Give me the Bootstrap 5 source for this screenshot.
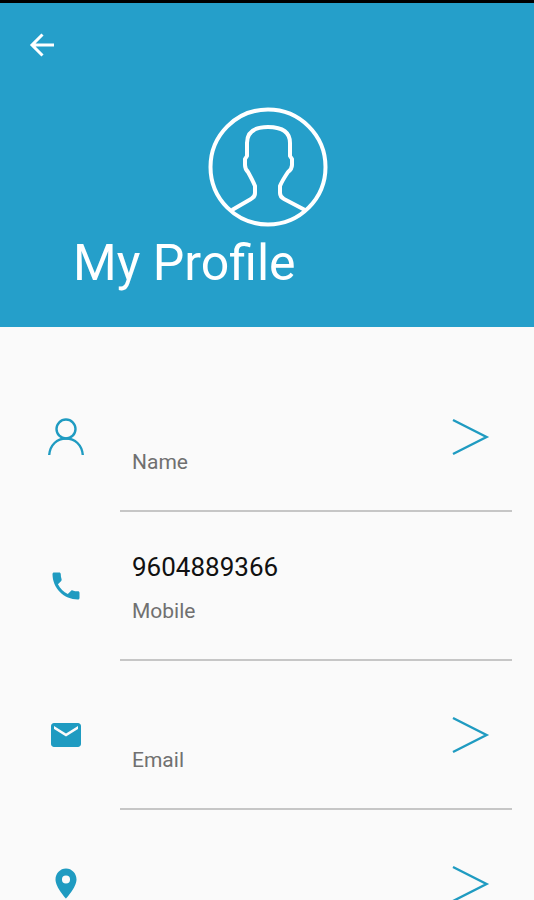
<!DOCTYPE html>
<html lang="en">
<head>
<meta charset="utf-8">
<meta name="viewport" content="width=device-width, initial-scale=1">
<title>My Profile</title>
<link rel="stylesheet" href="https://cdn.jsdelivr.net/npm/bootstrap@5.3.0/dist/css/bootstrap.min.css">
<style>
  :root { --brand: #259fca; --accent: #1f9bc1; }
  body { font-family: Roboto, "Liberation Sans", sans-serif; background: #fafafa; }
  svg { overflow: visible; }
  .status-strip { height: 3px; background: #000; }
  .profile-header { background: var(--brand); padding: 24px 24px 34px; }
  .back-btn { width: 36px; height: 36px; }
  .avatar { width: 120px; height: 120px; margin-top: 44px; }
  .profile-title { font-size: 50px; line-height: 60px; font-weight: 400; padding: 6px 0 0 49px; margin: 0; }
  .profile-list { padding: 36px 22px 0 0; }
  .profile-row { min-height: 149px; }
  .row-icon { width: 120px; padding: 0 0 2px 48px; color: var(--accent); }
  .row-body { border-bottom: 2px solid #c6c6c6; padding: 39px 24px 0 12px; }
  .row-value { font-size: 26px; line-height: 32px; min-height: 32px; color: #111; }
  .row-label { font-size: 21px; line-height: 28px; margin-top: 14px; color: #707070; }
  .edit-btn { width: 36px; height: 36px; margin-top: 17px; color: var(--accent); }
</style>
<script src="https://cdn.jsdelivr.net/npm/bootstrap@5.3.0/dist/js/bootstrap.bundle.min.js"></script>
</head>
<body class="vh-100 overflow-hidden">
<div class="status-strip"></div>
<header class="profile-header text-white d-flex flex-column">
  <button type="button" class="btn back-btn p-0 border-0 text-white d-flex align-items-center justify-content-center" aria-label="Back">
    <svg width="36" height="36" viewBox="0 0 36 36" fill="none" stroke="currentColor" stroke-width="3"><path d="M30 18H8M18.500 7.500L8 18l10.500 10.500"/></svg>
  </button>
  <svg class="avatar align-self-center" viewBox="0 0 120 120" fill="none" stroke="#fff" stroke-width="4" stroke-linejoin="round" aria-hidden="true">
    <circle cx="61" cy="60" r="57.500"/>
    <path d="M25 103L44 92Q48 90 48 86V79Q46 74 41 65Q38 62 38 58V52L40 49V36C40 25 47 20 61 20S83 25 83 36V49L85 52V58Q85 62 81 65Q75 74 73 79V86Q73 90 77 92L98 103"/>
  </svg>
  <h1 class="profile-title">My Profile</h1>
</header>
<main>
  <ul class="profile-list list-unstyled mb-0">
    <li class="profile-row d-flex">
      <div class="row-icon d-flex align-items-center flex-shrink-0">
        <svg width="36" height="36" viewBox="0 0 36 36" fill="none" stroke="currentColor" stroke-width="2.400" aria-hidden="true"><circle cx="18" cy="10" r="9.500"/><path d="M1.200 36C2 26 9 19.500 18 19.500S34 26 34.800 36"/></svg>
      </div>
      <div class="row-body d-flex flex-grow-1 justify-content-between">
        <div><div class="row-value"></div><div class="row-label">Name</div></div>
        <button type="button" class="btn edit-btn p-0 border-0 d-flex" aria-label="Edit name"><svg width="36" height="36" viewBox="0 0 36 36" fill="none" stroke="currentColor" stroke-width="2.400"><path d="M1 1L34.500 18L1 35"/></svg></button>
      </div>
    </li>
    <li class="profile-row d-flex">
      <div class="row-icon d-flex align-items-center flex-shrink-0">
        <svg width="36" height="36" viewBox="0 0 24 24" fill="currentColor" aria-hidden="true"><path d="M6.620 10.790c1.440 2.830 3.760 5.140 6.590 6.590l2.200-2.200c.27-.27.67-.36 1.020-.24 1.120.37 2.330.57 3.570.57.55 0 1 .45 1 1V20c0 .55-.45 1-1 1-9.390 0-17-7.610-17-17 0-.55.45-1 1-1h3.500c.55 0 1 .45 1 1 0 1.250.2 2.450.57 3.570.11.35.03.74-.25 1.020l-2.200 2.200z"/></svg>
      </div>
      <div class="row-body d-flex flex-grow-1 justify-content-between">
        <div><div class="row-value">9604889366</div><div class="row-label">Mobile</div></div>
      </div>
    </li>
    <li class="profile-row d-flex">
      <div class="row-icon d-flex align-items-center flex-shrink-0">
        <svg width="36" height="36" viewBox="0 0 24 24" fill="currentColor" aria-hidden="true"><path d="M20 4H4c-1.100 0-1.990.9-1.990 2L2 18c0 1.100.9 2 2 2h16c1.100 0 2-.9 2-2V6c0-1.100-.9-2-2-2zm0 4l-8 5-8-5V6l8 5 8-5v2z"/></svg>
      </div>
      <div class="row-body d-flex flex-grow-1 justify-content-between">
        <div><div class="row-value"></div><div class="row-label">Email</div></div>
        <button type="button" class="btn edit-btn p-0 border-0 d-flex" aria-label="Edit email"><svg width="36" height="36" viewBox="0 0 36 36" fill="none" stroke="currentColor" stroke-width="2.400"><path d="M1 1L34.500 18L1 35"/></svg></button>
      </div>
    </li>
    <li class="profile-row d-flex">
      <div class="row-icon d-flex align-items-center flex-shrink-0">
        <svg width="36" height="36" viewBox="0 0 24 24" fill="currentColor" aria-hidden="true"><path d="M12 1.700C8.130 1.700 5 5 5 9c0 5.250 7 12.700 7 12.700s7-7.450 7-12.700c0-4-3.130-7.300-7-7.300zm0 10a2.700 2.700 0 1 1 0-5.400 2.700 2.700 0 0 1 0 5.400z"/></svg>
      </div>
      <div class="row-body d-flex flex-grow-1 justify-content-end">
        <button type="button" class="btn edit-btn p-0 border-0 d-flex" aria-label="Edit location"><svg width="36" height="36" viewBox="0 0 36 36" fill="none" stroke="currentColor" stroke-width="2.400"><path d="M1 1L34.500 18L1 35"/></svg></button>
      </div>
    </li>
  </ul>
</main>
</body>
</html>
